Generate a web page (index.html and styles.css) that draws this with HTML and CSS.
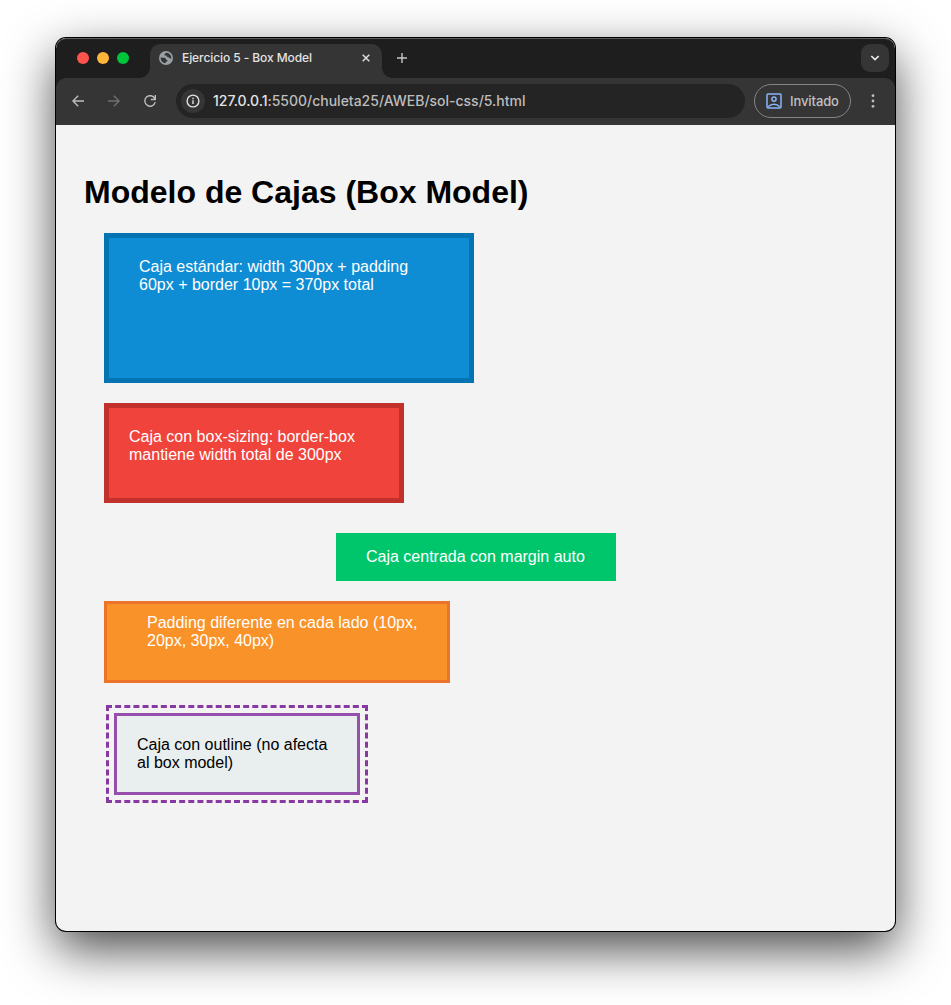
FILE: index.html
```html
<!DOCTYPE html>
<html lang="es">
<head>
<meta charset="utf-8">
<title>Ejercicio 5 - Box Model</title>
<link rel="stylesheet" href="styles.css">
</head>
<body>
<div class="window">
  <div class="tabstrip">
    <div class="lights"><span class="light red"></span><span class="light yellow"></span><span class="light green"></span></div>
    <div class="tab">
      <svg class="globe" width="14" height="14" viewBox="0 0 14 14"><circle cx="7" cy="7" r="7" fill="#9aa0a6"/><path d="M1.6 6.6 L4.4 6.8 C6.2 6.8 7 7.4 7 8.8 L8.4 8.9 L8.4 10.2 C7.4 10.4 6.7 10.8 6.5 12.3 C3.8 12.2 1.6 9.8 1.6 6.6Z M7.3 1.7 C5.8 2.4 5.2 3.2 5.6 4.4 L7.6 4.5 C7.6 5.8 8.4 6.4 9.8 6.3 C10.2 7.2 10.9 7.6 12.3 7.6 C12.7 4.6 10.6 1.9 7.3 1.7Z" fill="#353535"/></svg>
      <span class="tab-title">Ejercicio 5 - Box Model</span>
      <svg class="close" width="8" height="8" viewBox="0 0 8 8"><path d="M.7 .7 L7.3 7.3 M7.3 .7 L.7 7.3" stroke="#dedede" stroke-width="1.5"/></svg>
    </div>
    <svg class="plus" width="10" height="10" viewBox="0 0 10 10"><path d="M5 0V10M0 5H10" stroke="#c7c7c7" stroke-width="1.4"/></svg>
    <div class="tab-search"><svg width="10" height="6" viewBox="0 0 10 6"><path d="M1.3 1 L5 4.6 L8.7 1" fill="none" stroke="#e8e8e8" stroke-width="1.7"/></svg></div>
  </div>
  <div class="toolbar">
    <svg class="nav" width="12" height="12" viewBox="0 0 12 12"><path d="M12 6H1M6.2 .7L.9 6L6.2 11.3" fill="none" stroke="#bdbdbd" stroke-width="1.4"/></svg>
    <svg class="nav" width="12" height="12" viewBox="0 0 12 12"><path d="M0 6H11M5.8 .7L11.1 6L5.8 11.3" fill="none" stroke="#707070" stroke-width="1.4"/></svg>
    <svg class="nav" width="12" height="12" viewBox="0 0 12 12"><path d="M10.8 3.6A5.25 5.25 0 1 0 11.2 7.2M11.3 0V4.5H6.8" fill="none" stroke="#bdbdbd" stroke-width="1.4"/></svg>
    <div class="address">
      <span class="info"><svg width="14" height="14" viewBox="0 0 14 14"><circle cx="7" cy="7" r="5.9" fill="none" stroke="#e3e3e3" stroke-width="1.4"/><path d="M7 6.2V10M7 3.8V5.2" stroke="#e3e3e3" stroke-width="1.4"/></svg></span>
      <span class="url"><b>127.0.0.1</b>:5500/chuleta25/AWEB/sol-css/5.html</span>
    </div>
    <div class="profile">
      <svg width="16" height="16" viewBox="0 0 16 16" fill="none" stroke="#8ab4f8" stroke-width="1.5"><rect x="1" y="1" width="14" height="14" rx="1"/><circle cx="8" cy="6.1" r="2.1"/><path d="M2.2 13.8C5.2 10.4 10.8 10.4 13.8 13.8"/></svg>
      <span>Invitado</span>
    </div>
    <svg class="dots" width="4" height="14" viewBox="0 0 4 14" fill="#bdbdbd"><circle cx="2" cy="1.7" r="1.4"/><circle cx="2" cy="7" r="1.4"/><circle cx="2" cy="12.3" r="1.4"/></svg>
  </div>
  <main class="page">
    <h1 class="title">Modelo de Cajas (Box Model)</h1>
    <div class="box standard">Caja estándar: width 300px + padding 60px + border 10px = 370px total</div>
    <div class="box sized">Caja con box-sizing: border-box mantiene width total de 300px</div>
    <div class="box centered">Caja centrada con margin auto</div>
    <div class="box uneven">Padding diferente en cada lado (10px, 20px, 30px, 40px)</div>
    <div class="box outlined">Caja con outline (no afecta al box model)</div>
  </main>
</div>
</body>
</html>
```
FILE: styles.css
```css
body { margin: 0; padding: 38px 56px 74px; height: 1005px; box-sizing: border-box; background: #fff; overflow: hidden; }
.window { width: 839px; height: 893px; display: flex; flex-direction: column; border-radius: 10px; overflow: hidden; background: #f3f3f3; box-shadow: 0 0 0 1px #000, 0 18px 50px rgba(0,0,0,.72); font-family: Inter, Roboto, sans-serif; }
.tabstrip { height: 40px; flex: none; box-sizing: border-box; display: flex; align-items: center; background: #1e1e1e; border-radius: 10px 10px 0 0; box-shadow: inset 0 1px #606060; }
.lights { display: flex; gap: 8px; padding-left: 21px; width: 73px; }
.light { width: 12px; height: 12px; border-radius: 50%; }
.red { background: #ff544d; }
.yellow { background: #ffb43a; }
.green { background: #00c43c; }
.tab { position: relative; width: 232px; height: 34px; margin-top: 6px; box-sizing: border-box; padding: 0 12px 6px 9px; display: flex; align-items: center; background: #353535; border-radius: 10px 10px 0 0; }
.tab::before, .tab::after { content: ""; position: absolute; bottom: 0; width: 10px; height: 10px; }
.tab::before { left: -10px; background: radial-gradient(circle at 0 0, transparent 9.5px, #353535 10px); }
.tab::after { right: -10px; background: radial-gradient(circle at 100% 0, transparent 9.5px, #353535 10px); }
.tab-title { margin-left: 9px; font-size: 12px; line-height: 16px; font-weight: 500; color: #e3e3e3; letter-spacing: -.08px; white-space: nowrap; }
.close { margin-left: auto; }
.plus { margin-left: 15px; }
.tab-search { width: 28px; height: 28px; margin-left: auto; margin-right: 6px; border-radius: 9px; background: #353535; display: flex; align-items: center; justify-content: center; }
.toolbar { height: 47px; flex: none; box-sizing: border-box; display: flex; align-items: center; padding: 0 20px 1px 16px; background: radial-gradient(circle at 10px 10px, #353535 9.5px, #1e1e1e 10px) 0 0 / 10px 10px no-repeat, radial-gradient(circle at 0 10px, #353535 9.5px, #1e1e1e 10px) 100% 0 / 10px 10px no-repeat, #353535; }
.nav { margin-right: 24px; }
.address { width: 569px; height: 34px; margin-left: -4px; box-sizing: border-box; padding-left: 5px; display: flex; align-items: center; border-radius: 17px; background: #242424; }
.info { width: 24px; height: 24px; border-radius: 50%; background: #353535; display: flex; align-items: center; justify-content: center; }
.url { margin-left: 8px; font-size: 14px; line-height: 18px; font-weight: 500; letter-spacing: -.01px; color: #bdbdbd; white-space: nowrap; }
.url b { font-weight: 500; color: #e3e3e3; }
.profile { margin-left: 9px; width: 97px; height: 34px; box-sizing: border-box; border: 1px solid #858585; border-radius: 17px; padding-left: 11px; display: flex; align-items: center; gap: 8px; font-size: 13px; font-weight: 500; letter-spacing: -.1px; color: #c0c0c0; }
.dots { margin-left: auto; }
.page { flex: 1; padding: 0 27px 0 28px; font: 16px/18px "Liberation Sans", Arial, sans-serif; color: #fff; display: flex; flex-direction: column; }
.title { margin: 49px 0 23px; font-size: 32px; line-height: 36px; color: #000; }
.box { margin: 0 20px; }
.standard { width: 300px; height: 100px; padding: 20px 30px; border: 5px solid #0473b1; background: #0f8dd4; }
.sized { box-sizing: border-box; width: 300px; height: 100px; margin-top: 20px; padding: 20px; border: 5px solid #c2302b; background: #ef433b; }
.centered { width: 220px; margin: 30px auto 20px; padding: 15px 30px; background: #00c66b; align-self: center; }
.uneven { width: 280px; padding: 10px 20px 30px 40px; border: 3px solid #ee732a; background: #f99229; }
.outlined { width: 200px; margin: 30px; padding: 20px; border: 3px solid #974fae; background: #e9eeee; color: #000; outline: 3px dashed #8839a1; outline-offset: 5px; }
```
